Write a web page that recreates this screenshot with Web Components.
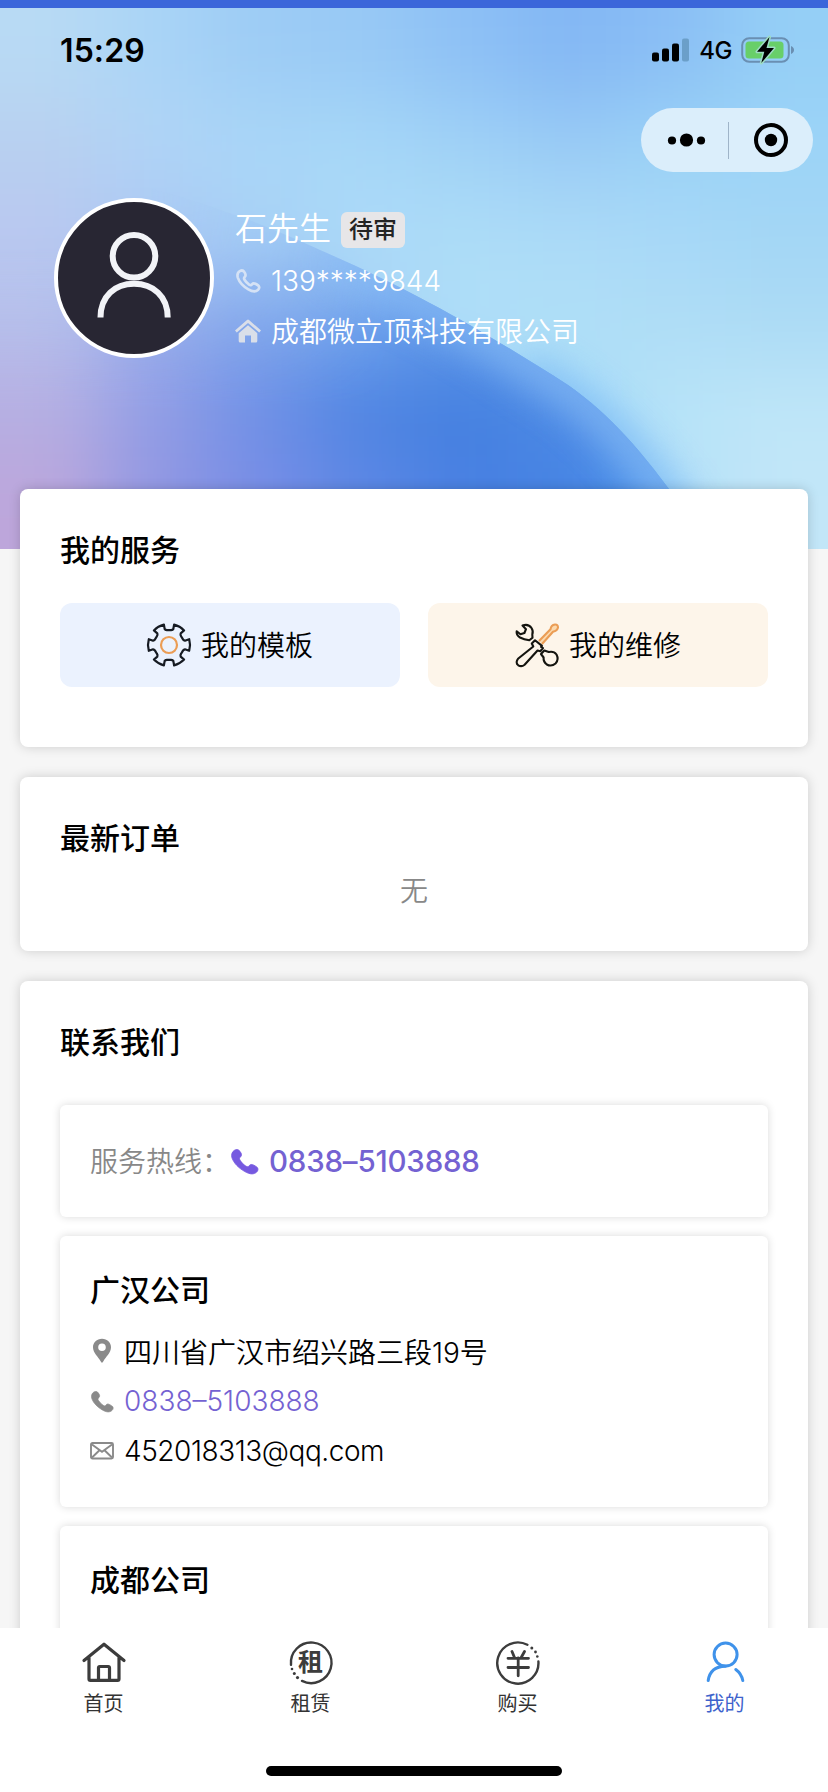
<!DOCTYPE html>
<html lang="zh-CN">
<head>
<meta charset="utf-8">
<title>我的</title>
<style>
html,body{margin:0;padding:0}
body{width:828px;height:1792px;overflow:hidden;background:#f6f6f6;font-family:Inter,"Noto Sans CJK SC",sans-serif;color:#000}
</style>
</head>
<body>
<mine-page></mine-page>
<script>
const define = (name, html) => {
  const t = document.createElement('template');
  t.innerHTML = html;
  customElements.define(name, class extends HTMLElement {
    constructor() {
      super();
      this.attachShadow({mode: 'open'}).appendChild(t.content.cloneNode(true));
    }
  });
};

/* ---------- icons ---------- */
const HANDSET = 'M3.2 1.2C5 .2 7 .3 8.300 2.200c1.600 2.200 2 3.700.6 5.200-1.300 1-1.300 1.700-.4 3.200 1.300 2.100 3 3.900 5.200 5.300 1.500 1 2.300.9 3.200-.3 1.200-1.400 2.500-1.400 4.400-.4 1.200.7 2.600 1.500 3.200 2.200.9 1.300.6 3-.6 4.100-2.700 2.600-6.400 2.300-11.100-.4C6.900 17.700 2.600 13.200.9 8.300.1 5.500.8 2.600 3.200 1.200z';
const gear = (() => {
  const c = 22;
  const P = (r, a) => { const x = a * Math.PI / 180; return (c + r * Math.cos(x)).toFixed(1) + ' ' + (c + r * Math.sin(x)).toFixed(1); };
  let d = '';
  for (let i = 0; i < 6; i++) {
    const n = -90 + i * 60;
    d += (i ? 'L' : 'M') + P(21, n - 14) + 'L' + P(16.5, n - 15) + 'Q' + P(15, n - 12) + ' ' + P(15, n - 6) +
         'L' + P(15, n + 6) + 'Q' + P(15, n + 12) + ' ' + P(16.5, n + 15) + 'L' + P(21, n + 14) +
         'A21 21 0 0 1 ' + P(21, n + 46);
  }
  return d + 'Z';
})();
const ICONS = {
  signal: ['0 0 38 24', '<rect x="0" y="14.500" width="7" height="9" rx="2"/><rect x="10" y="10.500" width="7" height="13" rx="2"/><rect x="20" y="5.500" width="7" height="18" rx="2"/><rect x="30" y=".5" width="7" height="23" rx="2" fill="#6b9fc9"/>'],
  battery: ['0 0 54 28', '<rect x="1.200" y="2.200" width="46.600" height="23.600" rx="7" fill="none" stroke="#6a8fb2" stroke-width="2"/><path d="M50 10c4 1.500 4 6.500 0 8z" fill="#6a8fb2"/><rect x="4.500" y="5.500" width="38" height="17" rx="3.500" fill="#68cf69"/><path d="M28.500 1L16 15.800h7.300L20.300 27 33 12h-7.500z" stroke="#9ddcc4" stroke-width="3" stroke-linejoin="round"/><path d="M28.500 1L16 15.800h7.300L20.300 27 33 12h-7.500z"/>'],
  dots: ['0 0 40 16', '<circle cx="5" cy="8.500" r="4.100"/><circle cx="19.500" cy="8" r="6.600"/><circle cx="34" cy="8.500" r="4.100"/>'],
  target: ['0 0 36 36', '<circle cx="18" cy="18" r="15" fill="none" stroke="#000" stroke-width="4"/><circle cx="18" cy="18" r="6.200"/>'],
  avatar: ['0 0 160 160', '<circle cx="80" cy="80" r="78" fill="#282633" stroke="#fff" stroke-width="4"/><g fill="none" stroke="#f2f3f7" stroke-width="6"><circle cx="80" cy="58.300" r="21.300"/><path d="M46.500 119.500C46.500 98 61 85.800 80 85.800s33.700 12.200 33.700 33.700"/></g>'],
  phoneLine: ['0 0 26 24', `<path d="${HANDSET}" fill="none" stroke="#d5e2f5" stroke-width="3"/>`],
  phone: ['0 0 26 23.4', `<path d="${HANDSET}" fill="currentColor" stroke="currentColor" stroke-width=".8"/>`],
  home: ['0 0 26 24', '<path d="M0 11.600L12 .9q1-.8 2 0l12 10.700-1.800 2L13 3.900 1.800 13.600z"/><path d="M13 6.200l9.300 8V22q0 1.500-1.500 1.500H16v-7h-6v7H5.200q-1.500 0-1.500-1.500v-7.800z"/>'],
  gear: ['0 0 44 44', `<path d="${gear}" fill="none" stroke="#161b22" stroke-width="2.200" stroke-linejoin="round"/><circle cx="22" cy="22" r="8" fill="none" stroke="#eb9d55" stroke-width="2.200"/>`],
  tools: ['0 0 44 44', '<g fill="none" stroke-width="2.100" stroke-linejoin="round"><path d="M24 18L35.500 6.300Q36 2 40 1.500q3-.2 3 3-.7 3.300-5 4.200L27 21" stroke="#eb9d55" fill="#fbd9ae"/><g stroke="#14140f"><path d="M7.500 2.500Q13.500.5 16.500 5q2 3 .8 6.500l.2 3.200-3.200 2.600Q9 16.500 5 14.500 1 12 1.700 8.200l3.700 3 4-1.200L11 6.200z"/><path d="M20 17.300l-3.200 3.200 1.500 3L3 35.800q-3 3.700.3 6.500 3.200 2 6.300-.6L22.500 27.500l2.800.8 2.700-3.200-2-1.200 1-1z"/><path d="M26 31l3.300-3.500 4.500 1.500q5-1.200 7.700 2.500 2.700 5-1 9-4 3.500-8.700 1-3.600-2.700-3.200-7z"/></g></g>'],
  pin: ['0 0 20 26', '<path fill-rule="evenodd" d="M10 .8C4.800.8 1 4.500 1 9.300 1 15 6.300 18.600 8.600 23.300L10 25l1.400-1.700C13.700 18.600 19 15 19 9.300 19 4.500 15.200.8 10 .8zm0 4.700a3.800 3.800 0 1 1 0 7.600 3.800 3.800 0 0 1 0-7.600z" fill="currentColor"/>'],
  mail: ['0 0 24 18', '<g fill="none" stroke="currentColor" stroke-width="1.900"><rect x="1" y="1" width="22" height="15.500" rx="1.500"/><path d="M2 2.500l10 7.300 10-7.300M2 15.500l7.500-7.300M22 15.500l-7.500-7.300"/></g>'],
  tabHome: ['0 0 44 44', '<g fill="none" stroke="#3c3c3c" stroke-width="3.200" stroke-linejoin="round" stroke-linecap="round"><path d="M2 19.500L22 3.200l20 16.300M7 16.500V38q0 1.300 1.300 1.300h27.400q1.300 0 1.300-1.300V16.500M16.500 39V26.800q0-1.300 1.300-1.300h8.400q1.300 0 1.300 1.300V39"/></g>'],
  tabRent: ['0 0 44 44', '<path d="M2 23.800A20.300 20.300 0 1 1 13 39.900" fill="none" stroke="#3c3c3c" stroke-width="2.400" stroke-linecap="round"/><g fill="#3c3c3c"><circle cx="3" cy="28" r="1.300"/><circle cx="5.300" cy="32.500" r="1.500"/><circle cx="8.500" cy="36.600" r="1.600"/></g><text x="21.500" y="30.300" text-anchor="middle" font-size="25" font-weight="600" fill="#3c3c3c">租</text>'],
  tabBuy: ['0 0 44 44', '<path d="M42.400 20.500A20.600 20.600 0 1 1 31.400 3.800" fill="none" stroke="#3c3c3c" stroke-width="2.400" stroke-linecap="round"/><g fill="#3c3c3c"><circle cx="35.800" cy="7" r="1.500"/><circle cx="39.500" cy="11" r="1.400"/><circle cx="41.300" cy="15.500" r="1.300"/></g><path d="M16 10.500l2.500 6M28.500 10.500l-3.300 6M12 17.300h20.500M12 26.500h20.500M22.200 17v17.800" fill="none" stroke="#3c3c3c" stroke-width="2.800" stroke-linecap="round"/>'],
  tabMine: ['0 0 44 44', '<g fill="none" stroke="#3f92ea" stroke-width="3" stroke-linecap="round"><circle cx="22.600" cy="13.600" r="11.500"/><path d="M22.300 25.300C12 25.500 6.500 31 5.200 39.500M32.800 28.500q5.500 4 7 11"/></g>']
};
customElements.define('ui-icon', class extends HTMLElement {
  connectedCallback() {
    const [box, body] = ICONS[this.getAttribute('name')];
    const w = this.getAttribute('w'), h = this.getAttribute('h');
    (this.shadowRoot || this.attachShadow({mode: 'open'})).innerHTML =
      `<style>:host{display:block;flex:none}svg{display:block;overflow:visible}</style><svg width="${w}" height="${h}" viewBox="${box}" preserveAspectRatio="none">${body}</svg>`;
  }
});

/* ---------- header ---------- */
/* Each mesh is a grid of colour patches, softened into one continuous gradient. */
const SKY = [
  'b8daf4 a9d4f6 9dccf5 98c9f5 8dc0f5 83b7f4 8abef5 95cff6',
  'b8d0f0 b0d4f6 a9d6f7 a6d7f7 9fd1f6 98caf5 9ad2f6 9cd4f7',
  'b9c8f0 aac8f4 a8d2f6 acdaf8 acdcf7 abdaf7 a7d8f7 a3d6f5',
  'b6c0ec 9bb3ed 90b4ef a6d2f6 b0dff8 b0dff7 afddf6 acdbf5',
  'b5aee2 929de6 6f94e6 6a9fea 98cef6 a6dbf8 b8e4f8 bfe6f8',
  'bda6db 9396e2 7c8ce4 5080e2 5090e8 88c4f5 b4e0f8 c2e6f8'];
const WAVE = [
  'b8daf4 a9d4f6 9dccf5 98c9f5 8dc0f5 83b7f4 8abef5 95cff6',
  'b8d0f0 b0d4f6 a9d6f7 a6d7f7 9fd1f6 92c5f5 98d0f6 9cd4f7',
  'b9c8f0 a8c6f4 9ac4f4 8fbaf2 90bdf3 90bdf3 90bdf3 90bdf3',
  'b6beea 94a9ea 7ba1ea 6a9eeb 5f98ea 6aa4ef 80b4f0 80b4f0',
  'b5aee2 929de5 6f90e6 4f84e2 437fdf 4c8ae5 5e9eed 7ab4f2',
  'bda6db 9196e2 7a8de6 5f88e5 4a81e3 4582e3 509aed 70b0f2'];
const mesh = rows => rows.map((r, j) => r.split(' ').map((c, i) => {
  const x = i ? i * 103.5 : -150, x2 = i === 7 ? 980 : (i + 1) * 103.5;
  const y = j ? j * 90.2 : -150, y2 = j === 5 ? 700 : (j + 1) * 90.2;
  return `<rect x="${x}" y="${y}" width="${x2 - x + 1}" height="${y2 - y + 1}" fill="#${c}"/>`;
}).join('')).join('');
define('sky-backdrop', `<style>:host{display:block}svg{display:block;width:100%;height:100%}</style>
<svg viewBox="0 0 828 541" preserveAspectRatio="none">
<defs>
<filter id="f" filterUnits="userSpaceOnUse" x="-150" y="-150" width="1130" height="850" color-interpolation-filters="sRGB"><feGaussianBlur stdDeviation="40"/></filter>
<filter id="g" filterUnits="userSpaceOnUse" x="0" y="0" width="828" height="700" color-interpolation-filters="sRGB"><feGaussianBlur stdDeviation="18"/></filter>
<clipPath id="c"><path d="M-10 150C120 165 230 200 320 242C430 290 500 334 568 377C620 414 652 455 712 541H-10z"/></clipPath>
<linearGradient id="m1" gradientUnits="userSpaceOnUse" x1="150" y1="0" x2="400" y2="0"><stop offset="0" stop-color="#000"/><stop offset="1" stop-color="#fff"/></linearGradient>
<linearGradient id="m2" gradientUnits="userSpaceOnUse" x1="0" y1="240" x2="0" y2="400"><stop offset="0" stop-color="#fff" stop-opacity="0"/><stop offset="1" stop-color="#fff"/></linearGradient>
<mask id="m" maskUnits="userSpaceOnUse" x="-10" y="0" width="850" height="541"><rect x="-10" width="850" height="541" fill="url(#m1)"/><rect x="-10" width="850" height="541" fill="url(#m2)"/></mask>
</defs>
<g filter="url(#f)">${mesh(SKY)}</g>
<path d="M520 370C580 400 640 450 710 570" fill="none" stroke="#78b8f5" stroke-width="52" opacity=".75" filter="url(#g)"/>
<g mask="url(#m)"><g clip-path="url(#c)"><g filter="url(#f)">${mesh(WAVE)}</g>
<path d="M330 246C430 290 500 334 568 377C620 414 652 455 712 541" fill="none" stroke="#84b9f4" stroke-width="44" opacity=".75" filter="url(#g)"/></g></g>
</svg>`);

define('status-bar', `<style>
:host{display:flex;justify-content:space-between;align-items:center;height:40px;padding:0 33px 0 60px}
.t{font-size:32px;font-weight:600;letter-spacing:.1px}
.r{display:flex;align-items:center}
.n{font-size:24px;font-weight:500;margin:0 9px 0 9px;letter-spacing:-.5px}
</style><span class="t">15:29</span><div class="r"><ui-icon name="signal" w="38" h="24"></ui-icon><span class="n">4G</span><ui-icon name="battery" w="54" h="28"></ui-icon></div>`);

define('menu-capsule', `<style>
:host{display:flex;align-items:center;box-sizing:border-box;width:172px;height:64px;border-radius:32px;background:#dbeefb;padding:0 24px 0 26px;justify-content:space-between}
i{width:1px;height:37px;background:#9fb4c8;margin-left:-4px}
</style><ui-icon name="dots" w="40" h="16"></ui-icon><i></i><ui-icon name="target" w="36" h="36"></ui-icon>`);

define('user-profile', `<style>
:host{display:flex;color:#fff}
.info{display:flex;flex-direction:column;padding:6px 0 0 21px}
.row{display:flex;align-items:center;height:50px;font-size:28px;font-weight:350;white-space:nowrap}
.name{height:44px;font-size:32px;margin-bottom:8px}
.badge{display:flex;align-items:center;justify-content:center;width:64px;height:36px;border-radius:6px;background:#e7e6e8;color:#242424;font-size:24px;line-height:36px;font-weight:500;margin:8px 0 0 10px}
ui-icon{margin:0 10px 0 0;fill:#dadfe9}
.name>span:first-child{margin-top:-1px}
</style>
<ui-icon style="margin:0" name="avatar" w="160" h="160"></ui-icon>
<div class="info">
<div class="row name"><span>石先生</span><span class="badge">待审</span></div>
<div class="row"><ui-icon style="margin:0 11px 0 2px" name="phoneLine" w="23" h="22"></ui-icon><span>139****9844</span></div>
<div class="row"><ui-icon name="home" w="26" h="24"></ui-icon><span style="margin-top:-2px">成都微立顶科技有限公司</span></div>
</div>`);

define('page-header', `<style>
:host{display:grid;height:549px;box-sizing:border-box;border-top:8px solid #3b66da}
sky-backdrop,.c{grid-area:1/1;min-height:0;height:541px}
.c{display:flex;flex-direction:column;position:relative}
status-bar{margin-top:22px}
menu-capsule{align-self:flex-end;margin:38px 15px 0 0}
user-profile{margin:26px 0 0 54px}
</style><sky-backdrop></sky-backdrop><div class="c"><status-bar></status-bar><menu-capsule></menu-capsule><user-profile></user-profile></div>`);

/* ---------- cards ---------- */
define('section-card', `<style>
:host{display:block;box-sizing:border-box;background:#fff;border-radius:8px;box-shadow:0 0 12px rgba(0,0,0,.17);padding:39px 40px 0;position:relative}
h2{margin:0;font-size:30px;line-height:44px;font-weight:500}
</style><h2><slot name="title"></slot></h2><slot></slot>`);

define('service-button', `<style>
:host{display:flex;align-items:center;justify-content:center;gap:10px;height:84px;border-radius:12px;font-size:28px;font-weight:350}
span{margin-top:-2px}
</style><slot name="icon"></slot><span><slot></slot></span>`);

define('contact-card', `<style>
:host{display:block;box-sizing:border-box;background:#fff;border-radius:6px;box-shadow:0 0 9px rgba(0,0,0,.15);padding:0 30px}
</style><slot></slot>`);

define('contact-line', `<style>
:host{display:flex;align-items:center;height:50px;font-size:28px;font-weight:350;white-space:nowrap}
.i{width:24px;margin-right:10px;display:flex;justify-content:center;color:#8a8a8a}
</style><span class="i"><slot name="icon"></slot></span><span><slot></slot></span>`);

/* ---------- tab bar ---------- */
define('tab-item', `<style>
:host{display:flex;flex-direction:column;align-items:center;flex:1;font-size:20px;line-height:30px;color:#333}
span{margin-top:4px}
</style><slot name="icon"></slot><span><slot></slot></span>`);

define('tab-bar', `<style>
:host{display:flex;flex-direction:column;align-items:center;justify-content:space-between;height:164px;background:#fff;position:relative}
nav{display:flex;width:828px;padding-top:13px}
i{width:296px;height:10px;border-radius:5px;background:#000;margin-bottom:16px}
</style><nav>
<tab-item><ui-icon slot="icon" name="tabHome" w="44" h="44"></ui-icon>首页</tab-item>
<tab-item><ui-icon slot="icon" name="tabRent" w="44" h="44"></ui-icon>租赁</tab-item>
<tab-item><ui-icon slot="icon" name="tabBuy" w="44" h="44"></ui-icon>购买</tab-item>
<tab-item style="color:#3d62cc"><ui-icon slot="icon" name="tabMine" w="44" h="44"></ui-icon>我的</tab-item>
</nav><i></i>`);

/* ---------- page ---------- */
define('mine-page', `<style>
:host{display:flex;flex-direction:column;width:828px;height:1792px;overflow:hidden}
main{flex:1;min-height:0;overflow:hidden}
.cards{display:flex;flex-direction:column;gap:30px;padding:0 20px;margin-top:-60px}
.services{display:grid;grid-template-columns:1fr 1fr;gap:28px;margin-top:31px}
.empty{text-align:center;color:#888;font-size:28px;font-weight:350;line-height:40px;margin-top:11px}
.contacts{display:flex;flex-direction:column;gap:19px;margin-top:41px}
.hot{display:flex;align-items:center;height:112px;font-size:28px;color:#888;font-weight:350}
.hot b{font-weight:500;font-size:29.500px;color:#7462d2;letter-spacing:-.2px}
.hot ui-icon{color:#7659e0;margin:0 10px 0 0}
.hot span{width:141px;margin-top:-2px}
h3{margin:0;font-size:30px;line-height:44px;font-weight:500;padding:32px 0 14px}
.num{color:#7462d2}
.mail{letter-spacing:-.45px}
</style>
<main><page-header></page-header>
<div class="cards">
<section-card style="height:258px"><span slot="title">我的服务</span>
<div class="services">
<service-button style="background:#ebf2fe"><ui-icon slot="icon" name="gear" w="44" h="44"></ui-icon>我的模板</service-button>
<service-button style="background:#fdf5ea"><ui-icon slot="icon" name="tools" w="44" h="44"></ui-icon>我的维修</service-button>
</div></section-card>
<section-card style="height:174px"><span slot="title">最新订单</span><div class="empty">无</div></section-card>
<section-card style="height:760px"><span slot="title">联系我们</span>
<div class="contacts">
<contact-card><div class="hot"><span>服务热线：</span><ui-icon name="phone" w="28" h="25"></ui-icon><b>0838–5103888</b></div></contact-card>
<contact-card style="height:271px"><h3>广汉公司</h3>
<contact-line><ui-icon slot="icon" name="pin" w="20" h="26"></ui-icon>四川省广汉市绍兴路三段19号</contact-line>
<contact-line class="num"><ui-icon slot="icon" name="phone" w="23" h="21"></ui-icon>0838–5103888</contact-line>
<contact-line class="mail"><ui-icon slot="icon" name="mail" w="24" h="18"></ui-icon>452018313@qq.com</contact-line>
</contact-card>
<contact-card style="height:271px"><h3>成都公司</h3></contact-card>
</div></section-card>
</div></main>
<tab-bar></tab-bar>`);
</script>
</body>
</html>
